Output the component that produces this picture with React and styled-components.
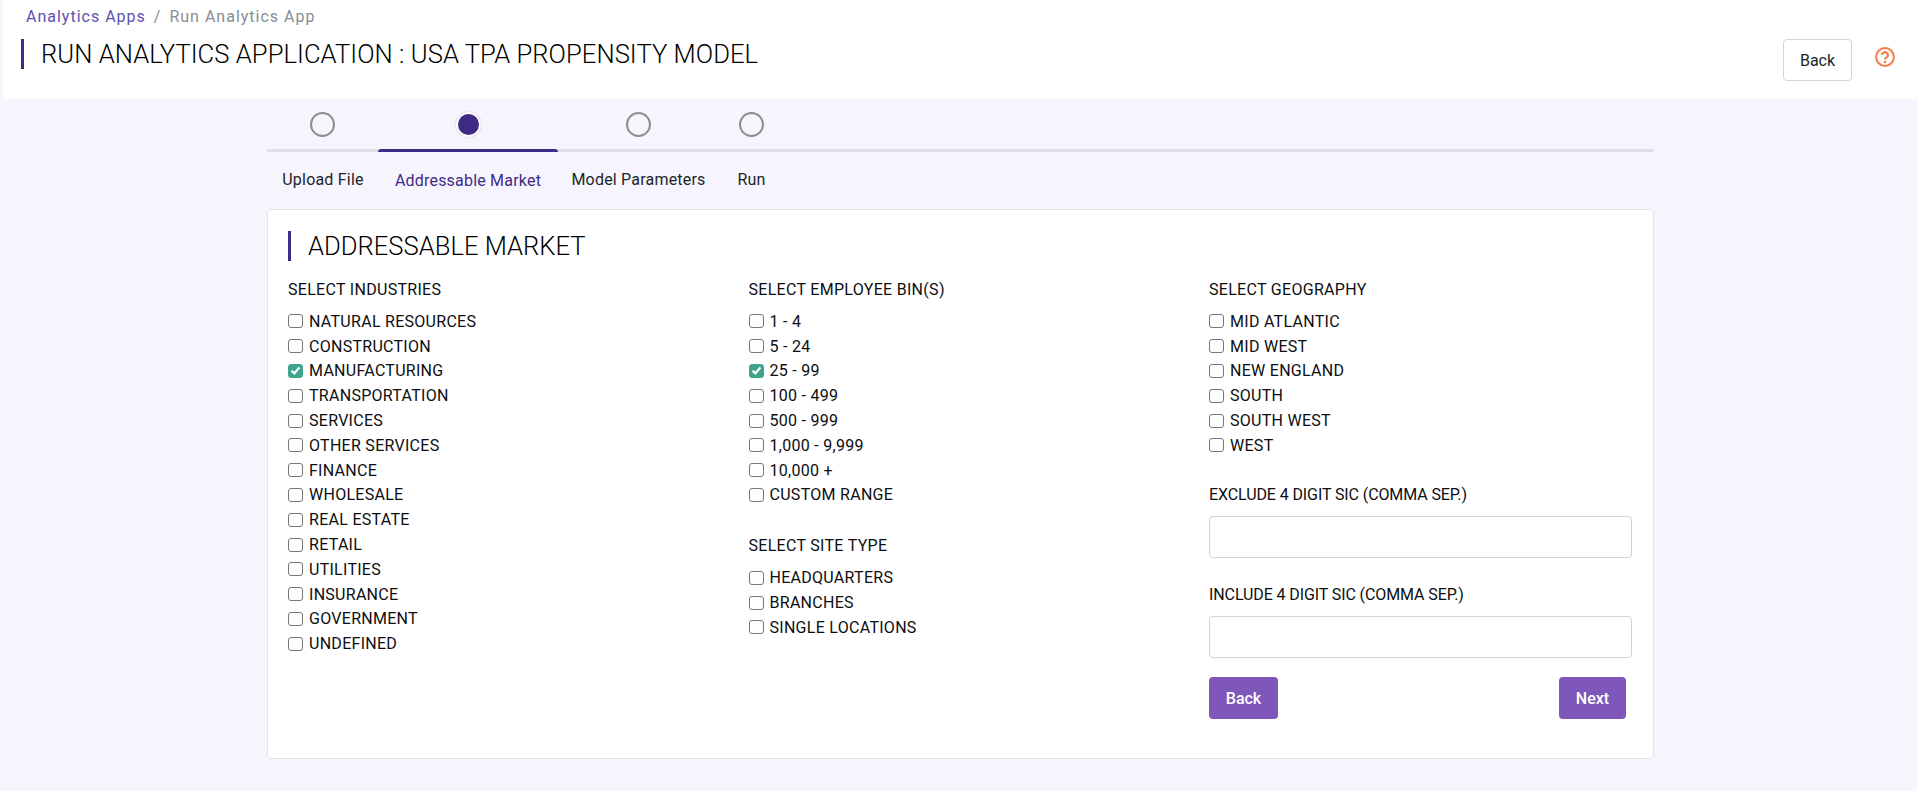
import React from 'react';
import styled, { createGlobalStyle } from 'styled-components';

const GlobalStyle = createGlobalStyle`
  html, body {
    margin: 0;
    padding: 0;
    background: #f6f5fe;
    font-family: Roboto, "Liberation Sans", sans-serif;
    color: #212529;
  }
`;

const industries = [
  'NATURAL RESOURCES', 'CONSTRUCTION', 'MANUFACTURING', 'TRANSPORTATION', 'SERVICES',
  'OTHER SERVICES', 'FINANCE', 'WHOLESALE', 'REAL ESTATE', 'RETAIL', 'UTILITIES',
  'INSURANCE', 'GOVERNMENT', 'UNDEFINED',
];
const bins = ['1 - 4', '5 - 24', '25 - 99', '100 - 499', '500 - 999', '1,000 - 9,999', '10,000 +', 'CUSTOM RANGE'];
const siteTypes = ['HEADQUARTERS', 'BRANCHES', 'SINGLE LOCATIONS'];
const geography = ['MID ATLANTIC', 'MID WEST', 'NEW ENGLAND', 'SOUTH', 'SOUTH WEST', 'WEST'];
const steps = [
  { label: 'Upload File', width: 111 },
  { label: 'Addressable Market', width: 180 },
  { label: 'Model Parameters', width: 160 },
  { label: 'Run', width: 66 },
];

function CheckList({ items, checked }) {
  return (
    <List>
      {items.map((item) => (
        <Row key={item}>
          <Box $checked={item === checked}>
            {item === checked && (
              <svg width="11" height="11" viewBox="0 0 11 11">
                <path d="M1.6 5.8 L4.3 8.4 L9.4 2.6" fill="none" stroke="#fff" strokeWidth="2.2" />
              </svg>
            )}
          </Box>
          {item}
        </Row>
      ))}
    </List>
  );
}

export default function App() {
  return (
    <Page>
      <GlobalStyle />
      <Header>
        <div>
          <Crumbs>
            <CrumbLink>Analytics Apps</CrumbLink>
            <CrumbSep>/</CrumbSep>
            <span>Run Analytics App</span>
          </Crumbs>
          <PageTitle>RUN ANALYTICS APPLICATION : USA TPA PROPENSITY MODEL</PageTitle>
        </div>
        <HeaderActions>
          <OutlineButton>Back</OutlineButton>
          <svg width="20" height="20" viewBox="0 0 20 20">
            <circle cx="10" cy="10" r="8.9" fill="none" stroke="#f47c48" strokeWidth="2" />
            <path d="M7 7.9 a3 2.8 0 1 1 4.8 2.3 c-1.2.8-1.8 1.1-1.8 2.3" fill="none" stroke="#f47c48" strokeWidth="2.1" />
            <circle cx="10" cy="15" r="1.25" fill="#f47c48" />
          </svg>
        </HeaderActions>
      </Header>

      <Content>
        <Stepper>
          {steps.map((step, i) => (
            <Step key={step.label} $width={step.width}>
              <Dot $active={i === 1} />
              <StepLine $active={i === 1} />
              <StepLabel $active={i === 1}>{step.label}</StepLabel>
            </Step>
          ))}
          <StepFiller />
        </Stepper>

        <Card>
          <CardTitle>ADDRESSABLE MARKET</CardTitle>
          <Columns>
            <Column>
              <GroupLabel>SELECT INDUSTRIES</GroupLabel>
              <CheckList items={industries} checked="MANUFACTURING" />
            </Column>
            <Column>
              <GroupLabel>SELECT EMPLOYEE BIN(S)</GroupLabel>
              <CheckList items={bins} checked="25 - 99" />
              <GroupLabel $spaced>SELECT SITE TYPE</GroupLabel>
              <CheckList items={siteTypes} />
            </Column>
            <Column>
              <GroupLabel>SELECT GEOGRAPHY</GroupLabel>
              <CheckList items={geography} />
              <FieldLabel $first>EXCLUDE 4 DIGIT SIC (COMMA SEP.)</FieldLabel>
              <TextField />
              <FieldLabel>INCLUDE 4 DIGIT SIC (COMMA SEP.)</FieldLabel>
              <TextField />
              <Actions>
                <PrimaryButton $width={69}>Back</PrimaryButton>
                <PrimaryButton $width={67}>Next</PrimaryButton>
              </Actions>
            </Column>
          </Columns>
        </Card>
      </Content>
    </Page>
  );
}

const Page = styled.div`
  min-height: 791px;
  box-sizing: border-box;
`;

const Header = styled.header`
  margin-left: 3px;
  height: 99px;
  background: #fff;
  display: flex;
  justify-content: space-between;
  padding: 6px 22px 0 18px;
  box-sizing: border-box;
`;

const Crumbs = styled.div`
  padding-left: 5px;
  font-size: 16px;
  line-height: 21px;
  letter-spacing: 1px;
  color: #868e96;
`;

const CrumbLink = styled.span`
  color: #5d50ae;
`;

const CrumbSep = styled.span`
  margin: 0 8px;
`;

const PageTitle = styled.h1`
  margin: 12px 0 0;
  padding-left: 17px;
  border-left: 3px solid #3f2a87;
  font-size: 25.6px;
  font-weight: 300;
  letter-spacing: 0.05px;
  line-height: 30px;
  color: #000;
`;

const HeaderActions = styled.div`
  display: flex;
  align-items: flex-start;
  gap: 23px;
  padding-top: 33px;

  svg {
    margin-top: 8px;
  }
`;

const OutlineButton = styled.button`
  width: 69px;
  height: 42px;
  background: #fff;
  border: 1px solid #d5d5dd;
  border-radius: 4px;
  font: 400 16px Roboto, sans-serif;
  color: #212529;
`;

const Content = styled.main`
  width: 1387px;
  margin-left: 267px;
`;

const Stepper = styled.div`
  display: flex;
`;

const Step = styled.div`
  display: flex;
  flex-direction: column;
  align-items: center;
  width: ${({ $width }) => $width}px;
`;

const StepFiller = styled.div`
  flex: 1;
  height: 3px;
  margin-top: 50px;
  background: #dfe0e8;
`;

const Dot = styled.span`
  width: 25px;
  height: 25px;
  margin-top: 13px;
  box-sizing: border-box;
  border-radius: 50%;
  border: 2px solid ${({ $active }) => ($active ? '#fff' : '#8d8d8d')};
  background: ${({ $active }) => ($active ? '#3f2a87' : 'transparent')};
  box-shadow: ${({ $active }) => ($active ? '0 0 2px #bbb' : 'none')};
`;

const StepLine = styled.span`
  align-self: stretch;
  height: 3px;
  margin-top: 12px;
  background: ${({ $active }) => ($active ? '#3f2a87' : '#dfe0e8')};
  border-radius: ${({ $active }) => ($active ? '3px 3px 0 0' : '0')};
`;

const StepLabel = styled.span`
  padding-top: ${({ $active }) => ($active ? '19px' : '18px')};
  padding-left: ${({ $active }) => ($active ? '0' : '1px')};
  font-size: 16px;
  letter-spacing: 0.2px;
  line-height: 20px;
  white-space: nowrap;
  color: ${({ $active }) => ($active ? '#3f2a87' : '#212529')};
`;

const Card = styled.section`
  margin-top: 18px;
  height: 550px;
  box-sizing: border-box;
  background: #fff;
  border: 1px solid #e3e3ec;
  border-radius: 4px;
  padding: 21px 20px;
`;

const CardTitle = styled.h2`
  margin: 0;
  padding-left: 17px;
  border-left: 3px solid #3f2a87;
  font-size: 25.6px;
  font-weight: 300;
  line-height: 30px;
  color: #000;
`;

const Columns = styled.div`
  display: grid;
  grid-template-columns: 460.5px 460.5px 423px;
  margin-top: 19px;
`;

const Column = styled.div`
  display: flex;
  flex-direction: column;
`;

const GroupLabel = styled.div`
  font-size: 16px;
  letter-spacing: 0.3px;
  line-height: 20px;
  color: #0c0e10;
  margin-top: ${({ $spaced }) => ($spaced ? '29px' : '0')};
  margin-bottom: 9px;
`;

const List = styled.div`
  display: flex;
  flex-direction: column;
`;

const Row = styled.label`
  display: flex;
  align-items: center;
  gap: 6px;
  height: 24.8px;
  font-size: 16px;
  letter-spacing: 0.28px;
  font-weight: 400;
  color: #0c0e10;
`;

const Box = styled.span`
  width: 15px;
  height: 14px;
  box-sizing: border-box;
  display: flex;
  align-items: center;
  justify-content: center;
  border-radius: 3px;
  border: 1px solid ${({ $checked }) => ($checked ? '#3ea58c' : '#76767c')};
  background: ${({ $checked }) => ($checked ? '#3ea58c' : '#fff')};
`;

const FieldLabel = styled.div`
  font-size: 16px;
  letter-spacing: -0.1px;
  line-height: 20px;
  color: #0c0e10;
  margin-top: ${({ $first }) => ($first ? '27px' : '27.5px')};
  margin-bottom: 11px;
`;

const TextField = styled.input`
  height: 42px;
  box-sizing: border-box;
  border: 1px solid #ced4da;
  border-radius: 4px;
  background: #fff;
`;

const Actions = styled.div`
  display: flex;
  justify-content: space-between;
  padding-right: 6px;
  margin-top: 19px;
`;

const PrimaryButton = styled.button`
  width: ${({ $width }) => $width}px;
  height: 42px;
  border: none;
  border-radius: 4px;
  background: #7f57bb;
  color: #fff;
  font: 500 16px Roboto, sans-serif;
`;
